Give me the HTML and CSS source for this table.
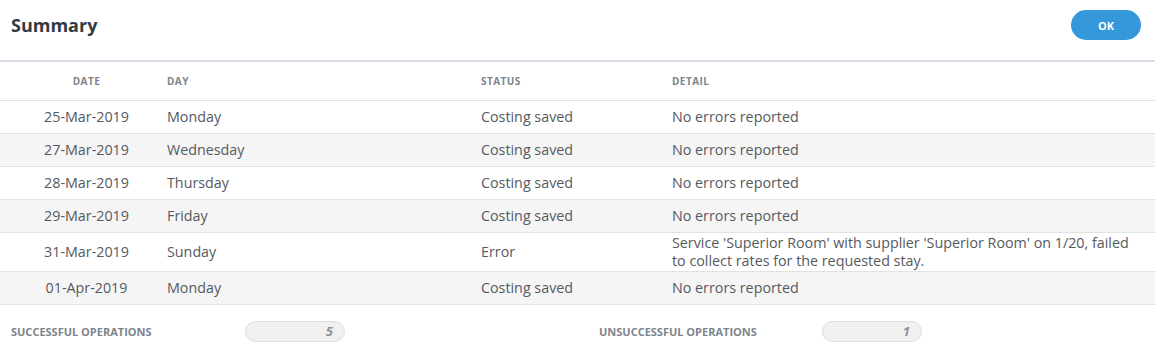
FILE: index.html
```html
<!DOCTYPE html>
<html>
<head>
<meta charset="utf-8">
<link rel="stylesheet" href="styles.css">
</head>
<body>
<div class="panel">
  <header class="top">
    <h1 class="title">Summary</h1>
    <button class="ok">OK</button>
  </header>
  <div class="table">
    <div class="row head">
      <div class="c date">Date</div>
      <div class="c day">Day</div>
      <div class="c status">Status</div>
      <div class="c detail">Detail</div>
    </div>
    <div class="row">
      <div class="c date">25-Mar-2019</div><div class="c day">Monday</div><div class="c status">Costing saved</div><div class="c detail">No errors reported</div>
    </div>
    <div class="row alt">
      <div class="c date">27-Mar-2019</div><div class="c day">Wednesday</div><div class="c status">Costing saved</div><div class="c detail">No errors reported</div>
    </div>
    <div class="row">
      <div class="c date">28-Mar-2019</div><div class="c day">Thursday</div><div class="c status">Costing saved</div><div class="c detail">No errors reported</div>
    </div>
    <div class="row alt">
      <div class="c date">29-Mar-2019</div><div class="c day">Friday</div><div class="c status">Costing saved</div><div class="c detail">No errors reported</div>
    </div>
    <div class="row tall">
      <div class="c date">31-Mar-2019</div><div class="c day">Sunday</div><div class="c status">Error</div><div class="c detail">Service 'Superior Room' with supplier 'Superior Room' on 1/20, failed to collect rates for the requested stay.</div>
    </div>
    <div class="row alt">
      <div class="c date">01-Apr-2019</div><div class="c day">Monday</div><div class="c status">Costing saved</div><div class="c detail">No errors reported</div>
    </div>
  </div>
  <footer class="foot">
    <div class="stat first">
      <span class="label l1">Successful operations</span>
      <span class="pill">5</span>
    </div>
    <div class="stat second">
      <span class="label l2">Unsuccessful operations</span>
      <span class="pill">1</span>
    </div>
  </footer>
</div>
</body>
</html>
```

FILE: styles.css
```css
* { box-sizing: border-box; }
html, body { margin: 0; padding: 0; background: #fff; }
body {
  font-family: "Open Sans", "Liberation Sans", sans-serif;
  color: #555;
  width: 1155px;
  height: 352px;
  overflow: hidden;
}
.top {
  height: 62px;
  display: flex;
  align-items: flex-start;
  justify-content: space-between;
  border-bottom: 2px solid #dddbea;
  padding: 0 14px 0 11px;
}
.title {
  margin: 12px 0 0 0;
  font-size: 18px;
  font-weight: 700;
  color: #333a44;
  line-height: 26px;
}
.ok {
  margin-top: 10px;
  width: 70px;
  height: 30px;
  border: none;
  border-radius: 15px;
  background: #3498db;
  color: #fff;
  font-family: "Open Sans", "Liberation Sans", sans-serif;
  font-weight: 700;
  font-size: 11px;
  padding: 0;
}
.row {
  display: grid;
  grid-template-columns: 155px 314px 191px 1fr;
  align-items: center;
  height: 33px;
  border-bottom: 1px solid #e2e2e2;
  font-size: 14.3px;
  color: #555a60;
}
.row.alt { background: #f5f5f5; }
.row.tall { height: 39px; }
.row.head {
  height: 39px;
  font-size: 10px;
  font-weight: 700;
  text-transform: uppercase;
  color: #7d848c;
  letter-spacing: 0.45px;
}
.c { line-height: 18px; }
.c.date { text-align: center; padding-left: 18px; }
.c.day { padding-left: 12px; }
.c.status { padding-left: 12px; }
.c.detail { padding-left: 12px; padding-right: 25px; }
.foot {
  display: flex;
  align-items: center;
  height: 47px;
  padding-left: 11px;
  padding-top: 5px;
}
.stat { display: flex; align-items: center; }
.label {
  font-size: 11px;
  font-weight: 700;
  text-transform: uppercase;
  color: #7d848c;
}
.l1 { width: 234px; }
.l2 { width: 223px; }
.second { margin-left: 254px; }
.pill {
  width: 100px;
  height: 21px;
  border: 1px solid #dedede;
  border-radius: 11px;
  background: #f0f0f0;
  text-align: right;
  padding-right: 11px;
  font-size: 13px;
  font-style: italic;
  font-weight: 700;
  color: #8a9096;
  line-height: 19px;
}
```
